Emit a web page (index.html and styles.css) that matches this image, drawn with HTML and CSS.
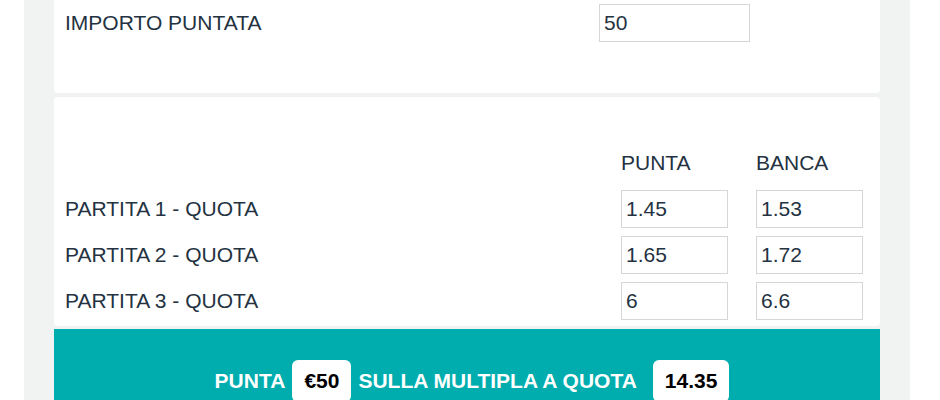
FILE: index.html
```html
<!DOCTYPE html>
<html lang="it">
<head>
<meta charset="utf-8">
<title>Calcolatore Multipla</title>
<link rel="stylesheet" href="styles.css">
</head>
<body>
<div class="page">
  <section class="card card-top">
    <div class="stake-row">
      <label class="label" for="importo">IMPORTO PUNTATA</label>
      <input class="field field-wide" id="importo" type="text" value="50">
    </div>
  </section>
  <section class="card card-odds">
    <div class="odds-grid">
      <span></span>
      <span class="col-head">PUNTA</span>
      <span class="col-head">BANCA</span>

      <span class="label">PARTITA 1 - QUOTA</span>
      <input class="field" type="text" value="1.45">
      <input class="field" type="text" value="1.53">

      <span class="label">PARTITA 2 - QUOTA</span>
      <input class="field" type="text" value="1.65">
      <input class="field" type="text" value="1.72">

      <span class="label">PARTITA 3 - QUOTA</span>
      <input class="field" type="text" value="6">
      <input class="field" type="text" value="6.6">
    </div>
  </section>
  <section class="result">
    <div class="result-line">
      <span class="result-text">PUNTA</span>
      <span class="pill">€50</span>
      <span class="result-text">SULLA MULTIPLA A QUOTA</span>
      <span class="pill pill-quota">14.35</span>
    </div>
  </section>
</div>
</body>
</html>
```
FILE: styles.css
```css
html, body {
  margin: 0;
  padding: 0;
  background: #ffffff;
  height: 400px;
  overflow: hidden;
}

body {
  font-family: "Liberation Sans", Arial, Helvetica, sans-serif;
  font-size: 21px;
  color: #243241;
}

.page {
  margin-left: 24px;
  width: 826px;
  padding: 0 30px;
  background: #f1f3f3;
  min-height: 400px;
  display: flex;
  flex-direction: column;
}

.card {
  background: #ffffff;
  border-radius: 4px;
}

.card-top {
  border-radius: 0 0 4px 4px;
  padding: 4px 17px 51px 11px;
}

.stake-row {
  display: flex;
  align-items: center;
  height: 38px;
}

.label {
  line-height: 24px;
  color: #243241;
  flex: 1;
}

.field {
  box-sizing: border-box;
  height: 38px;
  width: 107px;
  border: 1px solid #d6d6d6;
  border-radius: 0;
  padding: 0 4px;
  margin: 0;
  font-family: "Liberation Sans", Arial, Helvetica, sans-serif;
  font-size: 21px;
  color: #243241;
  background: #ffffff;
  outline: none;
}

.field-wide {
  width: 151px;
  margin-right: 113px;
}

.card-odds {
  margin-top: 4px;
  padding: 54px 17px 6px 11px;
}

.odds-grid {
  display: grid;
  grid-template-columns: 1fr 107px 107px;
  column-gap: 28px;
  row-gap: 8px;
  align-items: center;
}

.col-head {
  line-height: 24px;
  margin-bottom: 7px;
}

.result {
  margin-top: 3px;
  background: #00adae;
  padding-top: 31px;
  flex: 1;
}

.result-line {
  display: flex;
  align-items: center;
  justify-content: center;
  padding-left: 10px;
}

.result-text {
  color: #ffffff;
  font-weight: bold;
  line-height: 24px;
}

.pill {
  background: #ffffff;
  color: #000000;
  font-weight: bold;
  line-height: 42px;
  padding: 0 12px;
  border-radius: 6px;
  margin: 0 7px;
}

.pill-quota {
  margin-left: 16px;
  margin-right: 0;
}
```
